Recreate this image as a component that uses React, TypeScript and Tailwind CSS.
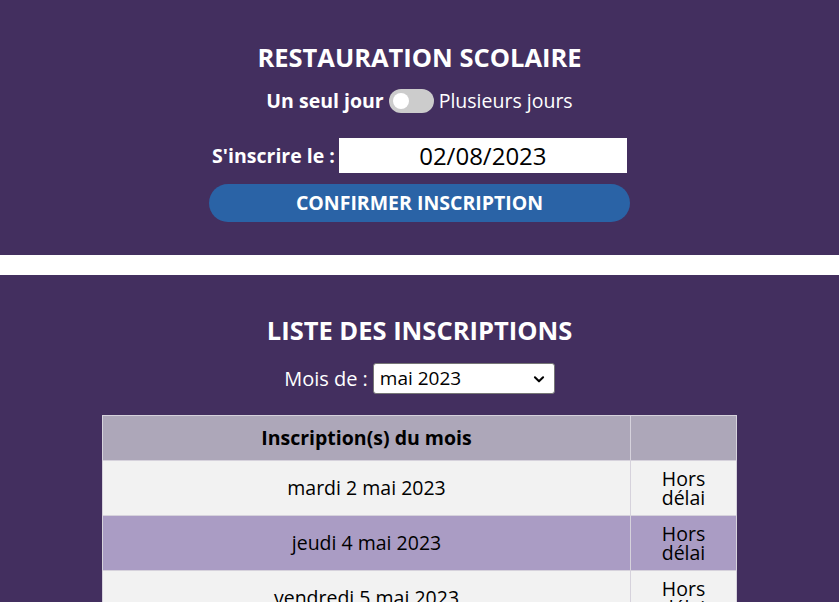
import React, { useState } from 'react';

const rows = [
  { date: 'mardi 2 mai 2023', alt: false },
  { date: 'jeudi 4 mai 2023', alt: true },
  { date: 'vendredi 5 mai 2023', alt: false },
  { date: 'lundi 8 mai 2023', alt: true },
];

const App: React.FC = () => {
  const [multi, setMulti] = useState(false);

  return (
    <div className="min-h-screen bg-white font-['Open_Sans',sans-serif] text-white">
      {/* Inscription */}
      <section className="bg-[#432f5f] pt-[40px] pb-[33px] flex flex-col items-center">
        <h1 className="text-[25.5px] font-bold leading-[34px]">RESTAURATION SCOLAIRE</h1>
        <div className="mt-[14px] flex items-center gap-[5px] text-[19.5px] leading-[26px]">
          <span className="font-bold">Un seul jour</span>
          <button
            onClick={() => setMulti(!multi)}
            className={`relative w-[45px] h-[24px] rounded-full ${multi ? 'bg-[#2a63a6]' : 'bg-[#cccccc]'}`}
          >
            <span
              className={`absolute top-[4px] w-[16px] h-[16px] rounded-full bg-white ${multi ? 'left-[25px]' : 'left-[4px]'}`}
            />
          </button>
          <span>Plusieurs jours</span>
        </div>
        <div className="mt-[24px] flex items-center gap-[4px]">
          <span className="text-[19.5px] font-bold">S'inscrire le :</span>
          <div className="w-[288px] h-[35px] bg-white text-black text-[24px] flex items-center justify-center">
            02/08/2023
          </div>
        </div>
        <button className="mt-[11px] w-[421px] h-[38px] rounded-full bg-[#2a63a6] text-[19.5px] font-bold">
          CONFIRMER INSCRIPTION
        </button>
      </section>

      <div className="h-[20px] bg-white" />

      {/* Liste */}
      <section className="bg-[#432f5f] pt-[38px] pb-[40px] flex flex-col items-center">
        <h2 className="text-[25.5px] font-bold leading-[34px]">LISTE DES INSCRIPTIONS</h2>
        <div className="mt-[16px] flex items-center gap-[5px] text-[20px]">
          <span>Mois de :</span>
          <div className="w-[182px] h-[31px] bg-white text-black rounded-[3px] border border-[#767676] flex items-center justify-between pl-[6px] pr-[8px]">
            <span className="text-[19px]">mai 2023</span>
            <svg width="14" height="14" viewBox="0 0 24 24" fill="none" stroke="black" strokeWidth="3.5" strokeLinecap="round" strokeLinejoin="round">
              <path d="M5 9l7 7 7-7" />
            </svg>
          </div>
        </div>
        <table className="mt-[21px] w-[635px] border-collapse text-black text-[19.5px]">
          <thead>
            <tr className="bg-[#ada7b9] h-[45px]">
              <th className="border border-[#d6d2dc] font-bold text-[19.5px]">Inscription(s) du mois</th>
              <th className="border border-[#d6d2dc] w-[106px]"></th>
            </tr>
          </thead>
          <tbody>
            {rows.map((r) => (
              <tr key={r.date} className={`h-[55px] ${r.alt ? 'bg-[#aa9cc4]' : 'bg-[#f2f2f2]'}`}>
                <td className="border border-[#d6d2dc] text-center">{r.date}</td>
                <td className="border border-[#d6d2dc] text-center leading-[19px]">
                  Hors<br />délai
                </td>
              </tr>
            ))}
          </tbody>
        </table>
      </section>
    </div>
  );
};

export default App;
